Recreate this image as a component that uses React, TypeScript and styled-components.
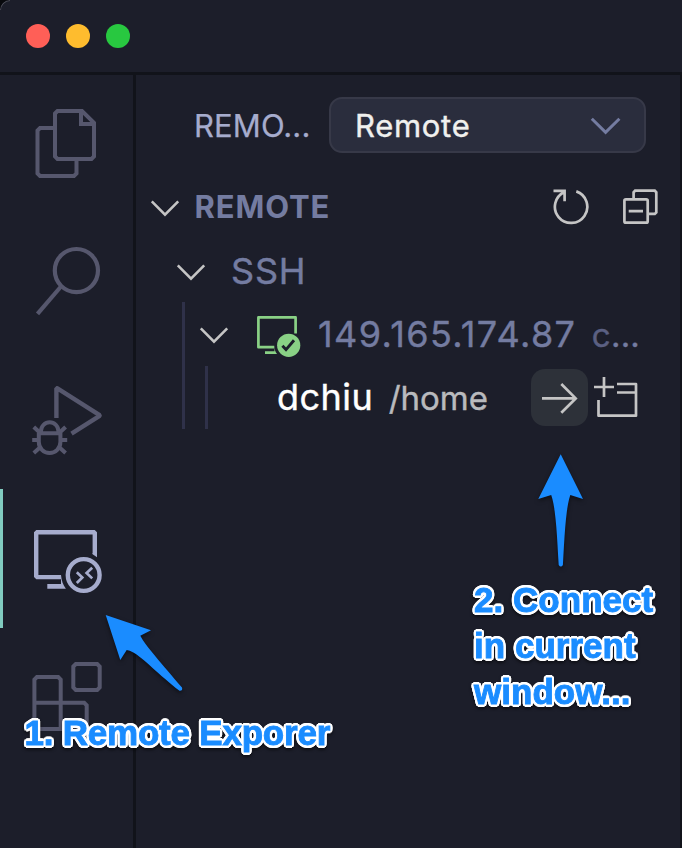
import React from "react";
import styled, { createGlobalStyle } from "styled-components";

const color = {
  bg: "#1c1e2a",
  divider: "#11131a",
  muted: "#747ca1",
  soft: "#a6accd",
  icon: "#c5c5c5",
  inactive: "#56576d",
  blue: "#1a8cff",
  green: "#89d185",
};

const outline = (radius: number, steps: number) =>
  Array.from({ length: steps }, (_, i) => {
    const a = (i / steps) * Math.PI * 2;
    return `${(Math.cos(a) * radius).toFixed(2)}px ${(Math.sin(a) * radius).toFixed(2)}px 0 #fff`;
  }).join(", ");

const GlobalStyle = createGlobalStyle`
  *, *::before, *::after { box-sizing: border-box; }
  body { margin: 0; background: #08090d; overflow: hidden; }
`;

const Window = styled.div`
  position: relative;
  display: flex;
  flex-direction: column;
  width: 682px;
  height: 848px;
  overflow: hidden;
  background: ${color.bg};
  border-top-left-radius: 10px;
  font-family: Inter, sans-serif;
  font-size: 31px;
  white-space: pre;

  &::before {
    content: "";
    position: absolute;
    top: 0;
    left: 0;
    width: 10px;
    height: 10px;
    border: solid #4c4d57;
    border-width: 1.5px 0 0 1.5px;
    border-top-left-radius: 10px;
  }
`;

const TitleBar = styled.header`
  flex: none;
  display: flex;
  align-items: center;
  gap: 16px;
  height: 75px;
  padding-left: 26px;
  border-bottom: 3px solid ${color.divider};
`;

const WindowButton = styled.span<{ $fill: string }>`
  width: 24px;
  height: 24px;
  border-radius: 50%;
  background: ${(p) => p.$fill};
`;

const Body = styled.div`
  flex: 1;
  display: flex;
  min-height: 0;
`;

const ActivityBar = styled.nav`
  flex: none;
  display: flex;
  flex-direction: column;
  width: 136px;
  border-right: 3px solid ${color.divider};
`;

const ActivityItem = styled.div<{ $active?: boolean }>`
  flex: none;
  display: flex;
  align-items: flex-start;
  height: 139px;
  padding: 29px 0 0 28px;
  border-left: 3px solid ${(p) => (p.$active ? "#80cbbf" : "transparent")};
  color: ${(p) => (p.$active ? color.soft : color.inactive)};

  &:first-child {
    height: 136px;
    padding-top: 26px;
  }
`;

const Svg = styled.svg`
  flex: none;
  display: block;
  fill: none;
  stroke: currentColor;
`;

const Sidebar = styled.aside`
  flex: 1;
  display: flex;
  flex-direction: column;
  border-right: 2px solid ${color.divider};
`;

const ViewHeader = styled.div`
  display: flex;
  align-items: center;
  height: 100px;
  padding: 0 34px 0 58px;
`;

const ViewTitle = styled.h2`
  margin: 0;
  width: 135px;
  font-size: 31px;
  font-weight: 400;
  letter-spacing: 0.1px;
  -webkit-text-stroke: 0.25px;
  color: ${color.soft};
`;

const Select = styled.button`
  flex: 1;
  display: flex;
  align-items: center;
  justify-content: space-between;
  height: 56px;
  padding: 0 23px 0 24px;
  border: 2px solid #373948;
  border-radius: 13px;
  background: #2a2d3d;
  font: 400 31px Inter, sans-serif;
  letter-spacing: 0.7px;
  -webkit-text-stroke: 0.4px;
  color: #f0f0ee;
`;

const SelectArrow = styled(Svg)`
  color: ${color.muted};
`;

const SectionRow = styled.div`
  display: flex;
  align-items: center;
  height: 64px;
  padding: 0 20px 0 14px;
  color: ${color.icon};
`;

const SectionTitle = styled.h3`
  flex: 1;
  margin: 0 0 0 14.5px;
  padding-bottom: 2px;
  font-size: 31px;
  font-weight: 700;
  letter-spacing: 0.87px;
  color: ${color.muted};
`;

const Actions = styled.div<{ $gap: number }>`
  display: flex;
  align-items: center;
  gap: ${(p) => p.$gap}px;
  margin-left: auto;
`;

const TreeRow = styled.div<{ $height: number; $indent: number }>`
  display: flex;
  align-items: center;
  height: ${(p) => p.$height}px;
  padding-left: ${(p) => p.$indent}px;
  padding-right: 38px;
  color: ${color.icon};
`;

const Guide = styled.span<{ $after: number }>`
  align-self: stretch;
  width: 3px;
  margin-right: ${(p) => p.$after}px;
  background: #2f3149;
`;

const Label = styled.span<{ $spacing: number; $start: number; $color?: string; $lift?: number }>`
  margin-left: ${(p) => p.$start}px;
  padding-bottom: ${(p) => p.$lift ?? 0}px;
  font-size: 36px;
  letter-spacing: ${(p) => p.$spacing}px;
  -webkit-text-stroke: 0.4px;
  color: ${(p) => p.$color ?? color.muted};
`;

const Description = styled.span<{ $color: string; $spacing?: number }>`
  margin-left: 15.5px;
  font-size: 33px;
  letter-spacing: ${(p) => p.$spacing ?? 0}px;
  color: ${(p) => p.$color};
`;

const Ellipsis = styled.span`
  color: ${color.muted};
`;

const HostIcon = styled(Svg)`
  margin-left: 27px;
  color: ${color.green};
`;

const ConnectButton = styled.span`
  display: flex;
  width: 57px;
  height: 57px;
  border-radius: 14px;
  background: #2d3139;
`;

const Pointer = styled.svg<{ $left: number; $top: number }>`
  position: absolute;
  left: ${(p) => p.$left}px;
  top: ${(p) => p.$top}px;
  fill: ${color.blue};
  filter: drop-shadow(0 2px 2px rgba(0, 0, 0, 0.5));
`;

const Note = styled.p<{ $left: number; $top: number; $spacing: number }>`
  position: absolute;
  left: ${(p) => p.$left}px;
  top: ${(p) => p.$top}px;
  margin: 0;
  font: 700 35px/46px "Liberation Sans", sans-serif;
  letter-spacing: ${(p) => p.$spacing}px;
  color: ${color.blue};
  -webkit-text-stroke: 0.9px ${color.blue};
  text-shadow: ${outline(2.7, 20)}, ${outline(1.5, 12)};
  filter: drop-shadow(0 2px 1.5px rgba(0, 0, 0, 0.5));
`;

const Chevron = () => (
  <Svg width="30" height="32" viewBox="0 0 30 32" strokeWidth="2.6">
    <path d="M1.8 10.4 L15 23.6 L28.2 10.4" />
  </Svg>
);

const FilesIcon = () => (
  <Svg width="72" height="80" viewBox="31 101 72 80" strokeWidth="4">
    <path d="M55 113.5 L57.5 111 H82 L94 122.8 V156.5 L91.5 159 H57.5 L55 156.5 Z" />
    <path d="M81 111 V124 H94" />
    <path d="M54 128 H40 L37.5 130.5 V173.5 L40 176 H74 L76.5 173.5 V160" />
  </Svg>
);

const SearchIcon = () => (
  <Svg width="72" height="80" viewBox="31 240 72 80" strokeWidth="4.2">
    <circle cx="76.4" cy="270.6" r="21.6" />
    <path d="M61 286.5 L37.5 313.8" />
  </Svg>
);

const DebugIcon = () => (
  <Svg width="72" height="80" viewBox="31 379 72 80" strokeWidth="4.4">
    <path d="M56.4 418 V388.3 H57.4 L99.6 415.2 V415.9 L71.5 433.6" strokeLinejoin="bevel" />
    <path d="M38.8 433.3 H60.5 M41 433 V431 a8.7 8.7 0 0 1 17.4 0 V433 M38.8 433 V442 a10.8 11 0 0 0 21.6 0 V433" strokeWidth="4" />
    <path d="M33.8 427 L40.5 433.3 M32.2 440 H39 M33.8 453 L41 446.5 M65.6 427 L58.9 433.3 M67.2 440 H60.4 M65.6 453 L58.4 446.5" strokeWidth="4" />
  </Svg>
);

const RemoteIcon = () => (
  <Svg width="72" height="80" viewBox="31 518 72 80" strokeWidth="4.4">
    <path d="M61 577.1 H37.2 L36.2 576.1 V533.2 L37.2 532.2 H93.8 L94.8 533.2 V554" />
    <path d="M92.6 553 V554.3 L97 557.3 V553 Z" fill="currentColor" stroke="none" />
    <path d="M61 575 C61.6 581 63 585 65.9 588.7 H47.3 V584 H61 Z" fill="currentColor" stroke="none" />
    <circle cx="83.7" cy="575" r="15.9" />
    <path d="M76.8 572.3 L82.3 577.5 L76.8 583 M92.2 567.8 L86.6 573 L92.2 578.4" strokeWidth="2.7" />
  </Svg>
);

const ExtensionsIcon = () => (
  <Svg width="72" height="80" viewBox="31 657 72 80" strokeWidth="4">
    <path d="M73.3 666.5 L75.8 664 H97.2 L99.7 666.5 V687.5 L97.2 690 H75.8 L73.3 687.5 Z" />
    <path d="M34.4 729 V679.5 L36.9 677 H58.2 L60.7 679.5 V729 M34.4 702.8 H84.2 L86.7 705.3 V726.5 L84.2 729 H34.4" />
  </Svg>
);

const RefreshIcon = () => (
  <Svg width="38" height="38" viewBox="552 188 38 38" strokeWidth="2.7">
    <path d="M576.3 191.4 A16.2 16.2 0 1 1 564.6 191.9 M553.5 190.9 H564.6 V201.2" />
  </Svg>
);

const CollapseAllIcon = () => (
  <Svg width="38" height="38" viewBox="622 188 38 38" strokeWidth="2.7">
    <rect x="624.4" y="199.4" width="23.3" height="23.3" rx="1.5" />
    <path d="M633.6 199 V192.2 L635.1 190.7 H654.8 L656.3 192.2 V212.4 L654.8 213.9 H648.5 M628.7 211.2 H643" />
  </Svg>
);

const ConnectedHostIcon = () => (
  <HostIcon width="45" height="48" viewBox="256 310 45 48" strokeWidth="2.7">
    <path d="M274.3 347.2 H258.4 V317.4 H295.6 V333.5" strokeLinejoin="round" />
    <path d="M274 346 C274.3 349 275.3 351.7 277 354 H265 V351.2 H274.5 Z" fill="currentColor" stroke="none" />
    <circle cx="288.7" cy="345.3" r="11.6" fill="currentColor" stroke="none" />
    <path d="M282.4 345.8 L286 349.6 L294 340.3" stroke={color.bg} strokeWidth="2.9" />
  </HostIcon>
);

const ArrowRightIcon = () => (
  <Svg width="57" height="57" viewBox="531 369 57 57" strokeWidth="2.7">
    <path d="M542 398.4 H575.5 M561.3 384 L575.7 398.4 L561.3 412.8" />
  </Svg>
);

const NewWindowIcon = () => (
  <Svg width="52" height="51" viewBox="590 372 52 51" strokeWidth="2.7">
    <path d="M594 387 H614 M604 377 V397 M617 384 H636 V415.7 H598.5 V400 M617 392.5 H636" strokeLinejoin="round" />
  </Svg>
);

export default function App() {
  return (
    <Window>
      <GlobalStyle />
      <TitleBar>
        <WindowButton $fill="#ff5f57" />
        <WindowButton $fill="#febc2e" />
        <WindowButton $fill="#28c840" />
      </TitleBar>
      <Body>
        <ActivityBar>
          <ActivityItem><FilesIcon /></ActivityItem>
          <ActivityItem><SearchIcon /></ActivityItem>
          <ActivityItem><DebugIcon /></ActivityItem>
          <ActivityItem $active><RemoteIcon /></ActivityItem>
          <ActivityItem><ExtensionsIcon /></ActivityItem>
        </ActivityBar>
        <Sidebar>
          <ViewHeader>
            <ViewTitle>REMO...</ViewTitle>
            <Select>
              Remote
              <SelectArrow width="32" height="32" viewBox="0 0 32 32" strokeWidth="3">
                <path d="M2.8 9.8 L16.6 23.4 L30.4 9.8" />
              </SelectArrow>
            </Select>
          </ViewHeader>
          <SectionRow>
            <Chevron />
            <SectionTitle>REMOTE</SectionTitle>
            <Actions $gap={32}>
              <RefreshIcon />
              <CollapseAllIcon />
            </Actions>
          </SectionRow>
          <TreeRow $height={63} $indent={40}>
            <Chevron />
            <Label $start={25} $spacing={0.8}>SSH</Label>
          </TreeRow>
          <TreeRow $height={64} $indent={46}>
            <Guide $after={14} />
            <Chevron />
            <ConnectedHostIcon />
            <Label $start={17} $spacing={1.39}>
              149.165.174.87
              <Description $color="#5b6082" $spacing={0.2}>
                c<Ellipsis>...</Ellipsis>
              </Description>
            </Label>
          </TreeRow>
          <TreeRow $height={63} $indent={46}>
            <Guide $after={20} />
            <Guide $after={0} />
            <Label $start={69} $spacing={0.45} $color="#ffffff" $lift={2}>
              dchiu
              <Description $color="#b9babd">/home</Description>
            </Label>
            <Actions $gap={2}>
              <ConnectButton><ArrowRightIcon /></ConnectButton>
              <NewWindowIcon />
            </Actions>
          </TreeRow>
        </Sidebar>
      </Body>
      <Pointer $left={100} $top={608} width="90" height="90" viewBox="100 608 90 90">
        <path d="M105.7 615 L151 630.3 L140.3 635.7 C145 645 162 664 182 687.5 Q183 691 179.5 690.8 C160 676 142 657 133.3 652.6 Q129.5 650 126.7 650 L120.3 660 Z" />
      </Pointer>
      <Pointer $left={530} $top={448} width="60" height="125" viewBox="530 448 60 125">
        <path d="M560.7 454.3 L583 499 L570.3 495 C565.8 508 564.6 535 562.9 565 Q560.9 568 558.7 565 C557 535 555.8 508 551.2 495 L538.3 499 Z" />
      </Pointer>
      <Note $left={24.5} $top={710} $spacing={-0.22}>1. Remote Exporer</Note>
      <Note $left={474} $top={576.5} $spacing={0.03}>{"2. Connect\nin current\nwindow..."}</Note>
    </Window>
  );
}
